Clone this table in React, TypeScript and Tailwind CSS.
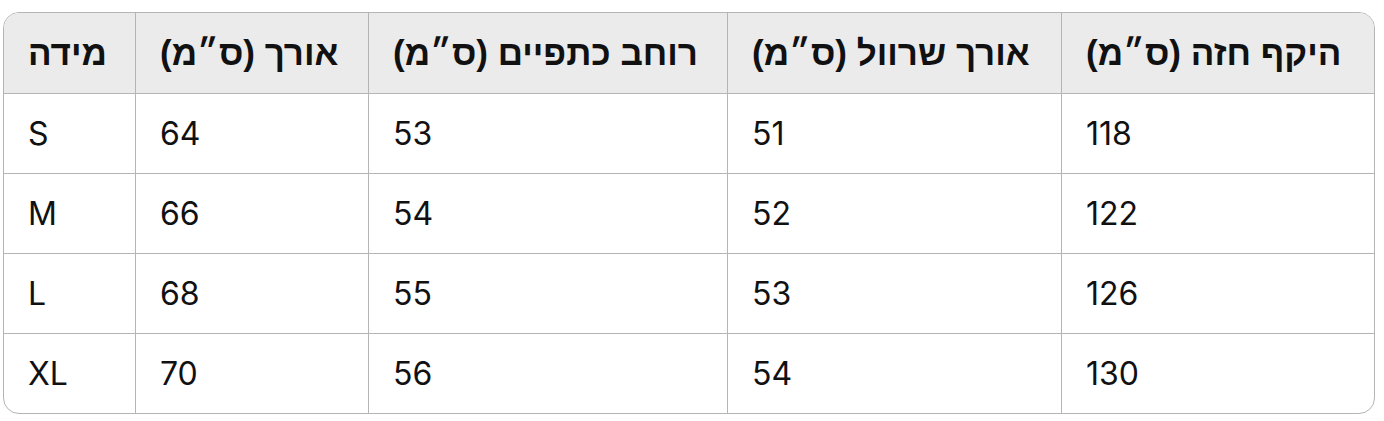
import React from 'react';

const headers = ['מידה', 'אורך (ס״מ)', 'רוחב כתפיים (ס״מ)', 'אורך שרוול (ס״מ)', 'היקף חזה (ס״מ)'];

const rows = [
  ['S', '64', '53', '51', '118'],
  ['M', '66', '54', '52', '122'],
  ['L', '68', '55', '53', '126'],
  ['XL', '70', '56', '54', '130'],
];

const cols = 'grid grid-cols-[131px_233px_359px_334px_313px]';

const App: React.FC = () => {
  return (
    <div className="w-[1384px] h-[421px] bg-white pt-[12px] pl-[3px] font-['Inter','Liberation_Sans',sans-serif] text-[#111111]">
      <div className="w-[1372px] rounded-[16px] border border-[#b5b5b5] overflow-hidden">
        <div className={`${cols} h-[80px] bg-[#ebebeb]`}>
          {headers.map((h, i) => (
            <div
              key={i}
              className={`flex items-center pl-6 text-[35px] font-bold font-['Liberation_Sans',sans-serif] ${i > 0 ? 'border-l border-[#b5b5b5]' : ''}`}
            >
              <span dir="rtl">{h}</span>
            </div>
          ))}
        </div>
        {rows.map((row, r) => (
          <div key={r} className={`${cols} h-[80px] border-t border-[#b5b5b5]`}>
            {row.map((cell, i) => (
              <div
                key={i}
                className={`flex items-center pl-6 text-[32px] ${i > 0 ? 'border-l border-[#b5b5b5]' : ''}`}
              >
                {cell}
              </div>
            ))}
          </div>
        ))}
      </div>
    </div>
  );
};

export default App;
